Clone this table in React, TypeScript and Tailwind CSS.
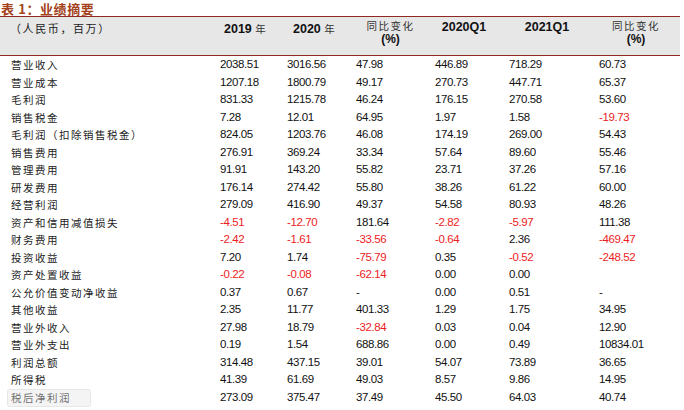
const rows: string[][] = [
  ['营业收入', '2038.51', '3016.56', '47.98', '446.89', '718.29', '60.73'],
  ['营业成本', '1207.18', '1800.79', '49.17', '270.73', '447.71', '65.37'],
  ['毛利润', '831.33', '1215.78', '46.24', '176.15', '270.58', '53.60'],
  ['销售税金', '7.28', '12.01', '64.95', '1.97', '1.58', '-19.73'],
  ['毛利润（扣除销售税金）', '824.05', '1203.76', '46.08', '174.19', '269.00', '54.43'],
  ['销售费用', '276.91', '369.24', '33.34', '57.64', '89.60', '55.46'],
  ['管理费用', '91.91', '143.20', '55.82', '23.71', '37.26', '57.16'],
  ['研发费用', '176.14', '274.42', '55.80', '38.26', '61.22', '60.00'],
  ['经营利润', '279.09', '416.90', '49.37', '54.58', '80.93', '48.26'],
  ['资产和信用减值损失', '-4.51', '-12.70', '181.64', '-2.82', '-5.97', '111.38'],
  ['财务费用', '-2.42', '-1.61', '-33.56', '-0.64', '2.36', '-469.47'],
  ['投资收益', '7.20', '1.74', '-75.79', '0.35', '-0.52', '-248.52'],
  ['资产处置收益', '-0.22', '-0.08', '-62.14', '0.00', '0.00', ''],
  ['公允价值变动净收益', '0.37', '0.67', '-', '0.00', '0.51', '-'],
  ['其他收益', '2.35', '11.77', '401.33', '1.29', '1.75', '34.95'],
  ['营业外收入', '27.98', '18.79', '-32.84', '0.03', '0.04', '12.90'],
  ['营业外支出', '0.19', '1.54', '688.86', '0.00', '0.49', '10834.01'],
  ['利润总额', '314.48', '437.15', '39.01', '54.07', '73.89', '36.65'],
  ['所得税', '41.39', '61.69', '49.03', '8.57', '9.86', '14.95'],
  ['税后净利润', '273.09', '375.47', '37.49', '45.50', '64.03', '40.74'],
];

const cjk = "font-['Noto_Sans_CJK_SC',sans-serif]";
const num = "font-['Liberation_Sans','Noto_Sans_CJK_SC',sans-serif]";
const cols = 'grid grid-cols-[220px_67px_69px_79px_74px_90px_81px]';

function Pct({ pr }: { pr: string }) {
  return (
    <div className={`flex flex-col items-center pt-[2px] ${pr}`}>
      <span className={`${cjk} text-[10.5px] leading-[13px] tracking-[1.5px] text-[#333]`}>同比变化</span>
      <span className={`${num} text-[12px] font-bold leading-[14px] text-[#111]`}>(%)</span>
    </div>
  );
}

export default function App() {
  return (
    <div className="w-[684px] h-[410px] bg-white overflow-hidden">
      <div className="h-[16px] pl-[1px] pt-[1px] flex items-end">
        <span className={`${cjk} text-[13px] font-bold leading-[15px] tracking-[0.6px] text-[#a3421b]`}>
          表 1：业绩摘要
        </span>
      </div>
      <div className="w-[680px] border-t border-b border-[#8e2a22] bg-[#e7e7e7]">
        <div className={`${cols} h-[38px]`}>
          <div className={`${cjk} pl-[10px] pt-[4px] text-[11px] tracking-[1.6px] leading-[14px] text-[#222]`}>
            （人民币，百万）
          </div>
          <div className={`${num} pl-[4px] pt-[5px] text-[12.5px] font-bold leading-[14px] text-[#111]`}>
            2019 <span className={`${cjk} text-[10.5px] font-normal text-[#333]`}>年</span>
          </div>
          <div className={`${num} pl-[6px] pt-[5px] text-[12.5px] font-bold leading-[14px] text-[#111]`}>
            2020 <span className={`${cjk} text-[10.5px] font-normal text-[#333]`}>年</span>
          </div>
          <Pct pr="pr-[10px]" />
          <div className={`${num} pt-[3px] pr-[16px] text-center text-[12.5px] font-bold leading-[14px] text-[#111]`}>
            2020Q1
          </div>
          <div className={`${num} pt-[3px] pr-[14px] text-center text-[12.5px] font-bold leading-[14px] text-[#111]`}>
            2021Q1
          </div>
          <Pct pr="pr-[7px]" />
        </div>
      </div>
      <div className="w-[680px]">
        {rows.map((r, i) => (
          <div key={i} className={`${cols} h-[17.5px] items-center`}>
            <div className={`${cjk} relative pl-[11px] text-[10.5px] tracking-[1.5px] leading-[17.5px] text-[#222]`}>
              {r[0]}
              {i === rows.length - 1 && (
                <span className="absolute left-[8px] top-[1px] h-[16px] w-[82px] rounded-[2px] bg-[#e4e4e4]/40 ring-1 ring-[#cfcfcf]/50" />
              )}
            </div>
            {r.slice(1).map((v, j) => (
              <div
                key={j}
                className={`${num} text-[11.5px] tracking-[-0.4px] leading-[17.5px] ${
                  v.startsWith('-') && v.length > 1 ? 'text-[#ec1c24]' : 'text-[#111]'
                }`}
              >
                {v}
              </div>
            ))}
          </div>
        ))}
      </div>
    </div>
  );
}
